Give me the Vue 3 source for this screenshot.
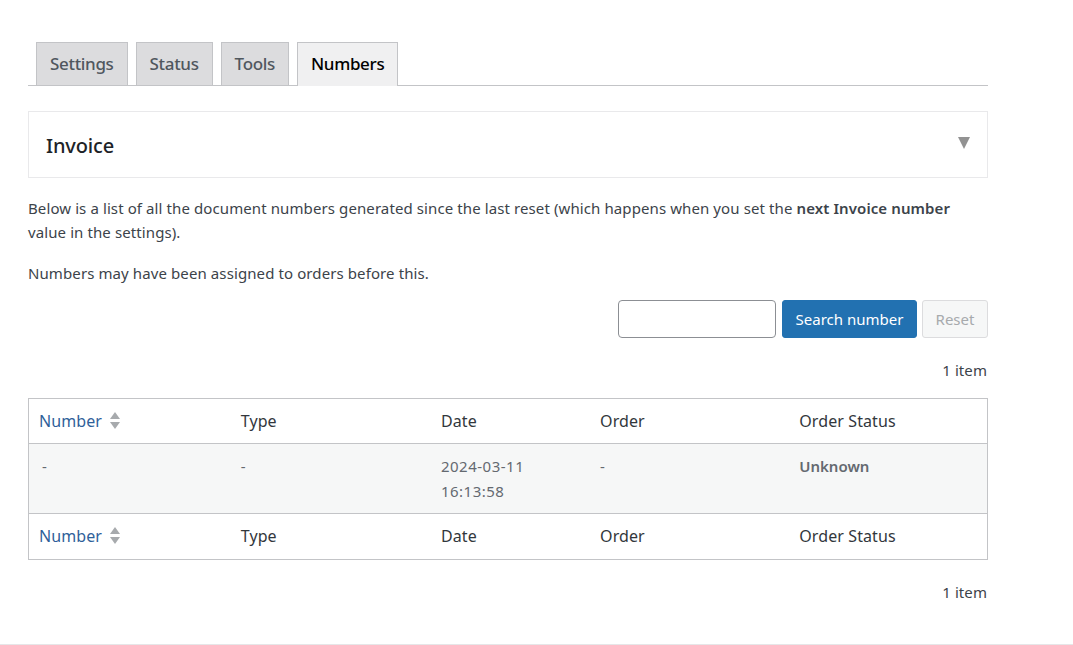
<template>
  <div class="page">
    <div class="wrap">
      <nav class="tabs">
        <a v-for="tab in tabs" :key="tab" class="tab" :class="{ active: tab === 'Numbers' }">{{ tab }}</a>
      </nav>

      <div class="panel">
        <h2>Invoice</h2>
        <span class="arrow"></span>
      </div>

      <p class="intro">
        Below is a list of all the document numbers generated since the last reset (which happens when you set the
        <strong>next Invoice number</strong> value in the settings).
      </p>
      <p class="intro second">Numbers may have been assigned to orders before this.</p>

      <div class="search">
        <input type="text" />
        <button class="primary">Search number</button>
        <button class="reset" disabled>Reset</button>
      </div>

      <div class="count top">1 item</div>

      <table>
        <colgroup>
          <col v-for="w in widths" :key="w.name" :style="{ width: w.size + 'px' }" />
        </colgroup>
        <thead>
          <tr>
            <th class="link"><span class="sortable">Number <span class="sort"><i class="up"></i><i class="down"></i></span></span></th>
            <th>Type</th>
            <th>Date</th>
            <th>Order</th>
            <th>Order Status</th>
          </tr>
        </thead>
        <tbody>
          <tr>
            <td class="first">-</td>
            <td>-</td>
            <td class="date">2024-03-11<br />16:13:58</td>
            <td>-</td>
            <td><strong>Unknown</strong></td>
          </tr>
        </tbody>
        <tfoot>
          <tr>
            <th class="link"><span class="sortable">Number <span class="sort"><i class="up"></i><i class="down"></i></span></span></th>
            <th>Type</th>
            <th>Date</th>
            <th>Order</th>
            <th>Order Status</th>
          </tr>
        </tfoot>
      </table>

      <div class="count bottom">1 item</div>
    </div>
    <div class="footer-line"></div>
  </div>
</template>

<script setup>
const tabs = ['Settings', 'Status', 'Tools', 'Numbers'];

const widths = [
  { name: 'number', size: 202 },
  { name: 'type', size: 200 },
  { name: 'date', size: 159 },
  { name: 'order', size: 199 },
  { name: 'status', size: 198 }
];
</script>

<style>
html,
body {
  margin: 0;
  background: #fff;
}
</style>

<style scoped>
.page {
  height: 645px;
  display: flex;
  flex-direction: column;
  box-sizing: border-box;
  padding: 42px 0 0 28px;
  font-family: "Noto Sans", "Open Sans", sans-serif;
  color: #3c434a;
  font-size: 15px;
  overflow: hidden;
}

.wrap {
  width: 960px;
  flex: 1;
}

.tabs {
  display: flex;
  gap: 8px;
  height: 44px;
  box-sizing: border-box;
  padding-left: 8px;
  border-bottom: 1px solid #c3c4c7;
}

.tab {
  height: 43px;
  box-sizing: border-box;
  padding: 0 13px 1px;
  display: flex;
  align-items: center;
  background: #dcdcde;
  border: 1px solid #c3c4c7;
  border-bottom: none;
  color: #50575e;
  font-size: 17px;
  font-weight: 500;
  letter-spacing: -0.33px;
}

.tab.active {
  height: 44px;
  padding-bottom: 2px;
  background: #f0f0f1;
  color: #000;
}

.panel {
  margin-top: 25px;
  height: 67px;
  box-sizing: border-box;
  border: 1px solid #e9e9eb;
  padding: 0 17px;
  display: flex;
  align-items: center;
  justify-content: space-between;
}

h2 {
  margin: 1px 0 0;
  font-size: 20px;
  font-weight: 500;
  color: #1d2327;
  letter-spacing: -0.15px;
}

.arrow {
  width: 0;
  height: 0;
  border-left: 6px solid transparent;
  border-right: 6px solid transparent;
  border-top: 12px solid #929292;
  margin-top: -4px;
}

.intro {
  margin: 18px 0 0;
  line-height: 24px;
  letter-spacing: 0.1px;
}

.intro strong {
  font-weight: 600;
}

.intro.second {
  margin-top: 17px;
}

.search {
  margin-top: 15px;
  display: flex;
  justify-content: flex-end;
}

input {
  width: 158px;
  height: 38px;
  box-sizing: border-box;
  border: 1px solid #8c8f94;
  border-radius: 4px;
  background: #fff;
  outline: none;
}

button {
  height: 38px;
  box-sizing: border-box;
  border-radius: 3px;
  font: inherit;
  padding: 0;
}

.primary {
  width: 135px;
  margin: 0 5px 0 6px;
  background: #2271b1;
  border: 1px solid #2271b1;
  color: #fff;
}

.reset {
  width: 66px;
  background: #f6f7f7;
  border: 1px solid #dcdcde;
  color: #a7aaad;
}

.count {
  text-align: right;
  padding-right: 1px;
  line-height: 20px;
  letter-spacing: 0.08px;
}

.count.top {
  margin-top: 22px;
}

.count.bottom {
  margin-top: 22px;
}

table {
  margin-top: 18px;
  width: 960px;
  table-layout: fixed;
  border-collapse: collapse;
  border: 1px solid #c3c4c7;
}

th {
  padding: 0 10px;
  text-align: left;
  font-weight: 400;
  font-size: 16px;
  letter-spacing: 0.1px;
  color: #32373c;
}

thead th {
  height: 44px;
}

tfoot th {
  height: 44px;
  padding-bottom: 1px;
}

thead tr {
  border-bottom: 1px solid #c3c4c7;
}

tfoot tr {
  border-top: 1px solid #c3c4c7;
}

th.link {
  color: #2f5f9a;
}

.sortable {
  display: inline-flex;
  align-items: center;
  gap: 8px;
}

.sort {
  display: inline-flex;
  flex-direction: column;
  gap: 3px;
  margin-top: -2px;
}

.sort i {
  width: 0;
  height: 0;
  border-left: 5.5px solid transparent;
  border-right: 5.5px solid transparent;
}

.sort .up {
  border-bottom: 7px solid #a7aaad;
}

.sort .down {
  border-top: 7px solid #a7aaad;
}

td {
  height: 70px;
  box-sizing: border-box;
  padding: 10px 10px 7px;
  vertical-align: top;
  background: #f6f7f7;
  line-height: 25px;
  font-size: 15px;
  color: #646970;
}

td.first {
  padding-left: 13px;
}

td.date {
  letter-spacing: 0.5px;
}

td strong {
  font-weight: 600;
}

.footer-line {
  height: 1px;
  margin-left: -28px;
  background: #e6e6e8;
  flex-shrink: 0;
}
</style>
